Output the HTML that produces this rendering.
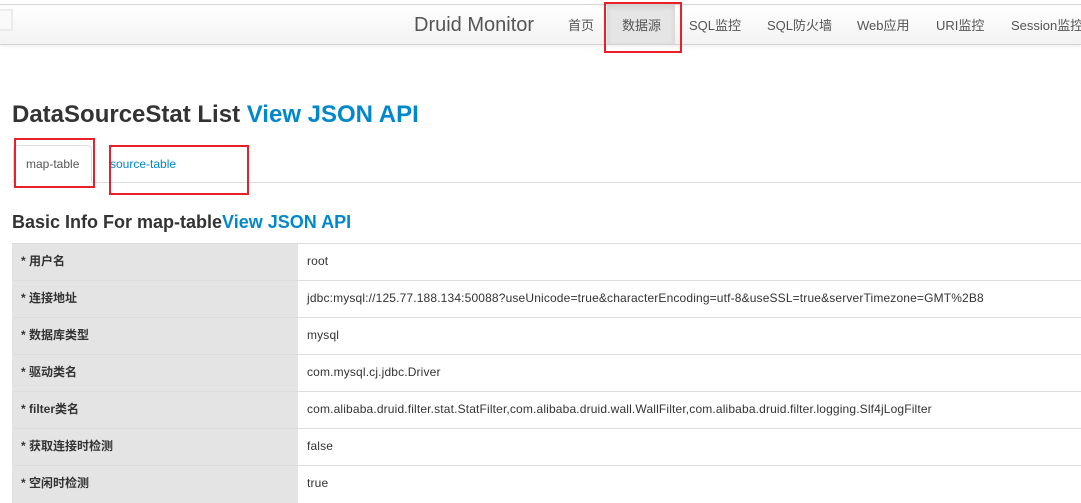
<!DOCTYPE html>
<html><head><meta charset="utf-8"><style>
*{margin:0;padding:0;box-sizing:border-box}
body{width:1081px;height:502px;overflow:hidden;background:#fff;font-family:"Liberation Sans","Noto Sans CJK SC",sans-serif;color:#333;position:relative;font-size:12px}
.nav{position:absolute;left:0;top:4px;width:1081px;height:41px;background:linear-gradient(#fff,#f2f2f2);border-top:1px solid #d4d4d4;border-bottom:1px solid #d4d4d4;box-shadow:0 2px 3px rgba(0,0,0,.06)}
.nav .sq{position:absolute;left:0;top:4px;width:13px;height:22px;border:2px solid #ececec;border-left:none;background:#fafafa}
.brand{position:absolute;left:414px;top:9px;font-size:20px;color:#555}
.it{position:absolute;top:10px;font-size:13px;color:#555}
.act{position:absolute;left:607px;top:0;width:68px;height:39px;background:#e5e5e5;box-shadow:inset 0 2px 6px rgba(0,0,0,.1)}
.red{position:absolute;border:2px solid #e8202a}
h1{position:absolute;left:12px;top:101px;font-size:24px;font-weight:bold;color:#333;white-space:nowrap}
h2{position:absolute;left:12px;top:212px;font-size:18px;font-weight:bold;color:#333;white-space:nowrap}
.b{color:#0088cc}
.tabline{position:absolute;left:12px;top:182px;width:1069px;height:1px;background:#ddd}
.tab{position:absolute;left:13px;top:145px;width:79px;height:38px;border:1px solid #ddd;border-bottom:none;background:#fff;border-radius:4px 4px 0 0}
table{position:absolute;left:12px;top:243px;width:1075px;border-collapse:collapse}
td{height:37px;border-top:1px solid #ddd;padding-left:9px;padding-bottom:2px;font-size:12px;color:#333;letter-spacing:0.15px}
td.l{width:286px;background:#e4e4e4;font-weight:bold;padding-bottom:4px;letter-spacing:0}
</style></head><body>
<div class="nav"><div class="sq"></div>
<div class="act"></div>
<div class="brand">Druid Monitor</div>
<div class="it" style="left:568px">首页</div>
<div class="it" style="left:622px">数据源</div>
<div class="it" style="left:689px">SQL监控</div>
<div class="it" style="left:767px">SQL防火墙</div>
<div class="it" style="left:857px">Web应用</div>
<div class="it" style="left:936px">URI监控</div>
<div class="it" style="left:1011px;white-space:nowrap">Session监控</div>
</div>
<div class="red" style="left:604px;top:2px;width:78px;height:51px"></div>
<h1>DataSourceStat List <span class="b">View JSON API</span></h1>
<div class="tabline"></div>
<div class="tab"></div>
<div style="position:absolute;left:26px;top:157px;color:#555">map-table</div>
<div style="position:absolute;left:110px;top:157px;color:#0088cc">source-table</div>
<div class="red" style="left:14px;top:138px;width:81px;height:50px"></div>
<div class="red" style="left:109px;top:145px;width:140px;height:50px"></div>
<h2>Basic Info For map-table<span class="b">View JSON API</span></h2>
<table>
<tr><td class="l">* 用户名</td><td>root</td></tr>
<tr><td class="l">* 连接地址</td><td>jdbc:mysql://125.77.188.134:50088?useUnicode=true&amp;characterEncoding=utf-8&amp;useSSL=true&amp;serverTimezone=GMT%2B8</td></tr>
<tr><td class="l">* 数据库类型</td><td>mysql</td></tr>
<tr><td class="l">* 驱动类名</td><td>com.mysql.cj.jdbc.Driver</td></tr>
<tr><td class="l">* filter类名</td><td>com.alibaba.druid.filter.stat.StatFilter,com.alibaba.druid.wall.WallFilter,com.alibaba.druid.filter.logging.Slf4jLogFilter</td></tr>
<tr><td class="l">* 获取连接时检测</td><td>false</td></tr>
<tr><td class="l">* 空闲时检测</td><td>true</td></tr>
</table>
</body></html>
